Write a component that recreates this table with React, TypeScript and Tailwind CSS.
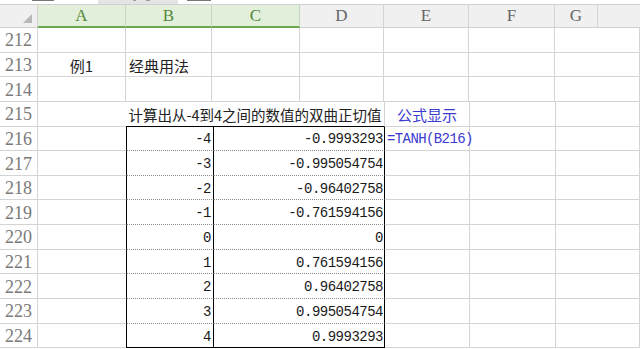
import React from "react";

const cjk = "font-['Noto_Sans_CJK_SC',sans-serif]";
const mono = "font-['Liberation_Mono','Noto_Sans_CJK_SC',monospace]";

const widths = ["w-[38px]", "w-[88px]", "w-[86px]", "w-[88px]", "w-[84px]", "w-[85px]", "w-[86px]", "flex-1"];
const letters = ["A", "B", "C", "D", "E", "F", "G"];

const values: [string, string][] = [
  ["-4", "-0.9993293"],
  ["-3", "-0.995054754"],
  ["-2", "-0.96402758"],
  ["-1", "-0.761594156"],
  ["0", "0"],
  ["1", "0.761594156"],
  ["2", "0.96402758"],
  ["3", "0.995054754"],
  ["4", "0.9993293"],
];

function RowNum({ n }: { n: number }) {
  return (
    <div className="w-[38px] shrink-0 border-r border-b border-[#d4d4d4] flex items-center justify-center pt-[2px] text-[18px] text-[#7a7a7a] font-['Liberation_Serif',serif]">
      {n}
    </div>
  );
}

function Cell({ w, className = "", children }: { w: string; className?: string; children?: React.ReactNode }) {
  return (
    <div className={`${w} shrink-0 border-r border-b border-[#d4d4d4] flex items-center pt-[3px] ${className}`}>
      {children}
    </div>
  );
}

function PlainRow({ n, a, b }: { n: number; a?: string; b?: string }) {
  return (
    <div className="flex h-[24.65px]">
      <RowNum n={n} />
      <Cell w={widths[1]} className={`justify-center text-[15px] text-[#222] ${cjk}`}>{a}</Cell>
      <Cell w={widths[2]} className={`px-[3px] text-[15px] text-[#222] ${cjk}`}>{b}</Cell>
      <Cell w={widths[3]} />
      <Cell w={widths[4]} />
      <Cell w={widths[5]} />
      <Cell w={widths[6]} />
      <Cell w={widths[7]} className="min-w-0" />
    </div>
  );
}

export default function App() {
  return (
    <div className="w-[640px] h-[349px] overflow-hidden bg-white">
      {/* formula bar remnants */}
      <div className="h-[5px] bg-[#e4e4e4] border-b border-[#d0d0d0] flex items-start">
        <div className="w-[98px] h-[4px] bg-white relative">
          <div className="absolute left-[32px] top-0 w-[22px] h-[1px] bg-[#777]" />
        </div>
        <div className="w-[80px] h-[4px] relative">
          <div className="absolute left-[35px] top-0 w-[3px] h-[1px] bg-[#999]" />
          <div className="absolute left-[48px] top-0 w-[4px] h-[1px] bg-[#999]" />
        </div>
        <div className="flex-1 h-[4px] bg-white relative">
          <div className="absolute left-[9px] top-0 w-[24px] h-[1px] bg-[#777]" />
        </div>
      </div>

      {/* column headers */}
      <div className="flex h-[23px]">
        <div className="w-[38px] shrink-0 bg-[#f0f0f0] border-r border-b border-[#d0d0d0] relative">
          <div className="absolute right-[5px] bottom-[4px] w-0 h-0 border-l-[9px] border-l-transparent border-b-[9px] border-b-[#b8b8b8]" />
        </div>
        {letters.map((l, i) => {
          const sel = i < 3;
          return (
            <div
              key={l}
              className={`${widths[i + 1]} shrink-0 flex items-center justify-center text-[17px] font-['Liberation_Serif',serif] border-r ${
                sel
                  ? "bg-[#e2efda] text-[#55883a] border-[#c6d8bc] border-b-2 border-b-[#6aa84f]"
                  : "bg-[#f0f0f0] text-[#666] border-[#d4d4d4] border-b border-b-[#cfcfcf]"
              }`}
            >
              {l}
            </div>
          );
        })}
        <div className="flex-1 bg-[#f0f0f0] border-b border-[#cfcfcf]" />
      </div>

      <PlainRow n={212} />
      <PlainRow n={213} a="例1" b="经典用法" />
      <PlainRow n={214} />

      {/* row 215: merged title */}
      <div className="flex h-[24.65px]">
        <RowNum n={215} />
        <Cell w={widths[1]} className="border-r-0 w-[87px]" />
        <div className="w-[259px] shrink-0 border-b border-black border-r border-r-[#d4d4d4] flex items-center justify-center pt-[3px] overflow-visible">
          <span className={`whitespace-nowrap text-[14.5px] text-[#222] ${cjk}`}>计算出从-4到4之间的数值的双曲正切值</span>
        </div>
        <Cell w={widths[5]} className={`justify-center text-[15px] text-[#3a3acf] ${cjk}`}>公式显示</Cell>
        <Cell w={widths[6]} />
        <Cell w={widths[7]} className="min-w-0" />
      </div>

      {values.map(([x, y], i) => {
        const last = i === values.length - 1;
        const rowBorder = last
          ? "border-b border-b-black"
          : "border-b border-b-[#8a8a8a] [border-bottom-style:dotted]";
        return (
          <div key={x} className="flex h-[24.65px]">
            <RowNum n={216 + i} />
            <Cell w={widths[1]} className="border-r-0 w-[87px]" />
            <div className={`w-[88px] shrink-0 border-l border-l-black border-r border-r-black ${rowBorder} flex items-center justify-end pr-[2px] pt-[3px] text-[14px] tracking-[-0.5px] text-[#1a1a1a] ${mono}`}>
              {x}
            </div>
            <div className={`w-[171px] shrink-0 border-r border-r-black ${rowBorder} flex items-center justify-end pr-[1px] pt-[3px] text-[14px] tracking-[-0.5px] text-[#1a1a1a] ${mono}`}>
              {y}
            </div>
            <Cell w={widths[5]} className={`overflow-visible text-[14px] tracking-[-0.6px] text-[#3a3acf] ${mono}`}>
              {i === 0 && <span className="whitespace-nowrap pl-[2px]">=TANH(B216)</span>}
            </Cell>
            <Cell w={widths[6]} />
            <Cell w={widths[7]} className="min-w-0" />
          </div>
        );
      })}
    </div>
  );
}
